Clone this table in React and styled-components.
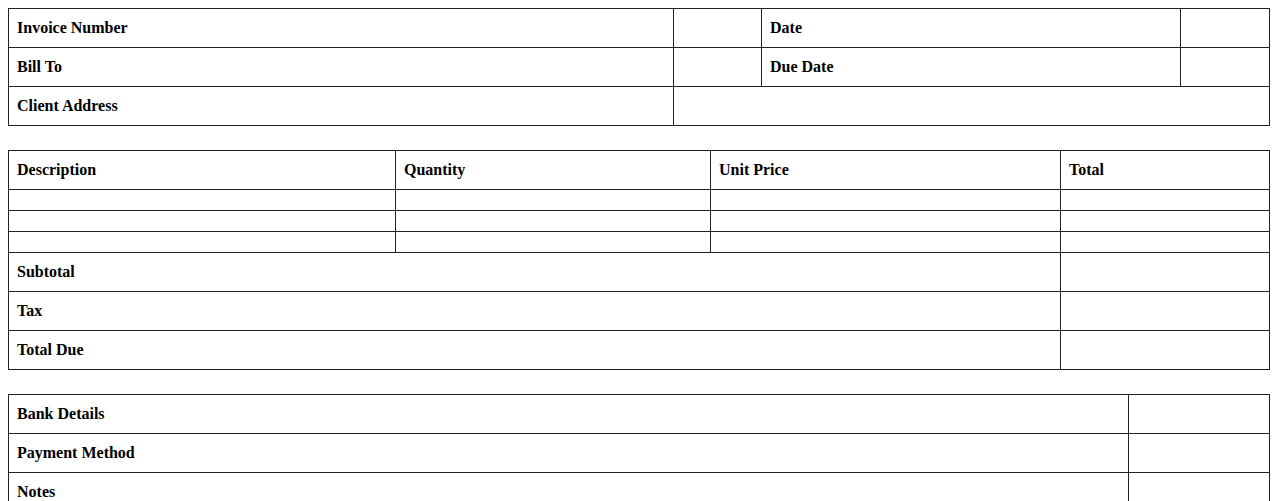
import React from "react";
import styled, { createGlobalStyle } from "styled-components";

const GlobalStyle = createGlobalStyle`
	body {
		margin: 8px;
		background: #fff;
		font-family: "Liberation Serif", "Times New Roman", serif;
		color: #000;
	}
`;

const Table = styled.table`
	width: 1262px;
	border-collapse: collapse;
	table-layout: fixed;
	margin-bottom: 24px;
`;

const Col = styled.col`
	width: ${(p) => p.$w}px;
`;

const Cell = styled.td`
	border: 1px solid #222;
	padding: 10px 8px;
	font-size: 16px;
	font-weight: ${(p) => (p.$label ? 700 : 400)};
	line-height: 18px;
	height: ${(p) => (p.$empty ? "0px" : "18px")};
	text-align: left;
	vertical-align: middle;
`;

const Label = ({ children, span }) => (
	<Cell $label colSpan={span}>
		{children}
	</Cell>
);

const Blank = ({ span, empty }) => <Cell colSpan={span} $empty={empty} />;

const Columns = ({ widths }) => (
	<colgroup>
		{widths.map((w, i) => (
			<Col key={i} $w={w} />
		))}
	</colgroup>
);

const InvoiceHeader = () => (
	<Table>
		<Columns widths={[665, 88, 419, 89]} />
		<tbody>
			<tr>
				<Label>Invoice Number</Label>
				<Blank />
				<Label>Date</Label>
				<Blank />
			</tr>
			<tr>
				<Label>Bill To</Label>
				<Blank />
				<Label>Due Date</Label>
				<Blank />
			</tr>
			<tr>
				<Label>Client Address</Label>
				<Blank span={3} />
			</tr>
		</tbody>
	</Table>
);

const LineItems = () => {
	const rows = [1, 2, 3];
	return (
		<Table>
			<Columns widths={[387, 315, 350, 209]} />
			<tbody>
				<tr>
					<Label>Description</Label>
					<Label>Quantity</Label>
					<Label>Unit Price</Label>
					<Label>Total</Label>
				</tr>
				{rows.map((r) => (
					<tr key={r}>
						<Blank empty />
						<Blank empty />
						<Blank empty />
						<Blank empty />
					</tr>
				))}
				<tr>
					<Label span={3}>Subtotal</Label>
					<Blank />
				</tr>
				<tr>
					<Label span={3}>Tax</Label>
					<Blank />
				</tr>
				<tr>
					<Label span={3}>Total Due</Label>
					<Blank />
				</tr>
			</tbody>
		</Table>
	);
};

const PaymentInfo = () => (
	<Table>
		<Columns widths={[1120, 141]} />
		<tbody>
			<tr>
				<Label>Bank Details</Label>
				<Blank />
			</tr>
			<tr>
				<Label>Payment Method</Label>
				<Blank />
			</tr>
			<tr>
				<Label>Notes</Label>
				<Blank />
			</tr>
		</tbody>
	</Table>
);

const App = () => (
	<>
		<GlobalStyle />
		<InvoiceHeader />
		<LineItems />
		<PaymentInfo />
	</>
);

export default App;
